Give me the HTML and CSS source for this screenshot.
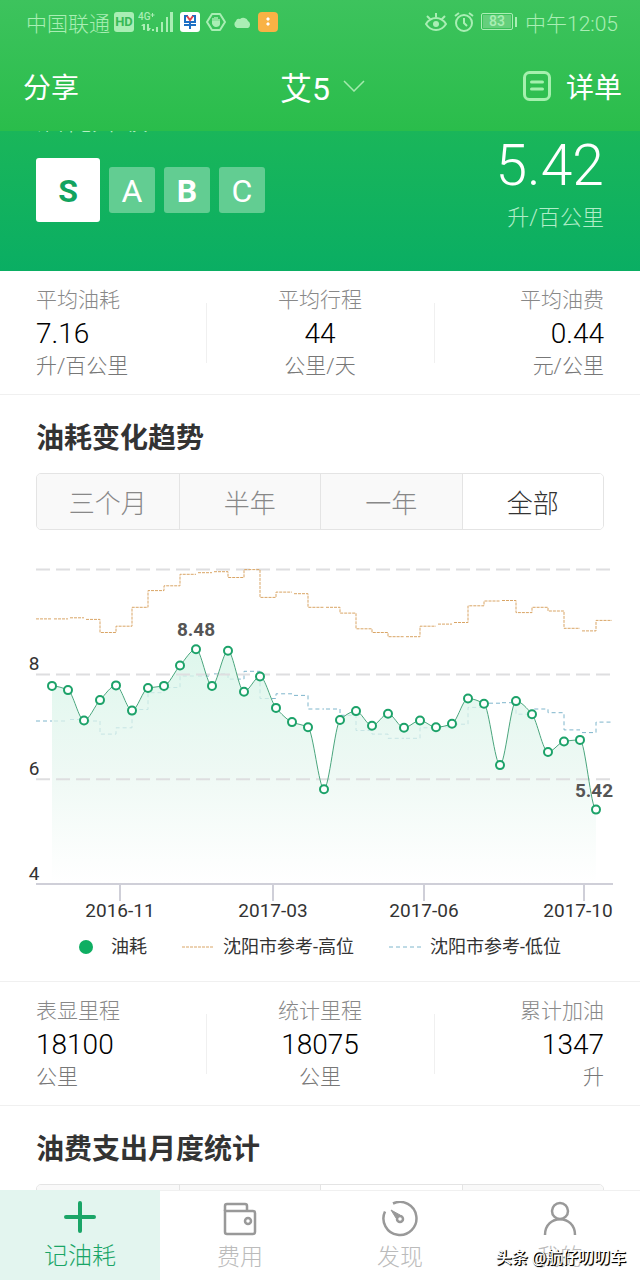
FILE: index.html
```html
<!DOCTYPE html>
<html lang="zh-CN">
<head>
	<meta charset="utf-8" />
	<meta name="viewport" content="width=device-width, initial-scale=1" />
	<title>油耗</title>
	<link rel="stylesheet" href="styles.css">
</head>
<body>

<div class="app">

	<header class="header">
		<!-- 状态栏 -->
		<div class="status">
			<div class="status-left">
				<span>中国联通</span>
				<span class="hd">HD</span>
				<svg width="36" height="22" viewBox="0 0 36 22">
					<text class="net" x="0" y="9">4G</text>
					<g fill="currentColor">
						<path d="M14 2h1v1.500h1.500v1H15V6h-1V4.500h-1.500v-1H14z"/>
						<path d="M5 13h2v6H5v-4H3zM9 13h2v4h2l-2 3H9z"/>
						<rect x="14" y="18" width="2" height="2"/>
						<rect x="18" y="16" width="2" height="5"/>
						<rect x="23" y="11" width="2" height="10"/>
						<rect x="28" y="6" width="2" height="15"/>
						<rect x="32" y="1" width="3" height="20"/>
					</g>
				</svg>
				<svg class="gap" width="20" height="20" viewBox="0 0 20 20">
					<rect width="20" height="20" rx="3" fill="#fff"/>
					<path d="M8 4H5v6h10V4h-3M10 10v7M4 13h12" fill="none" stroke="#1c6fc4" stroke-width="2"/>
					<path d="M7 4l3 4 3-4" fill="none" stroke="#e0434f" stroke-width="2"/>
				</svg>
				<svg class="gap" width="20" height="20" viewBox="0 0 20 20">
					<path d="M6 2h8l5 8-5 8H6l-5-8z" fill="none" stroke="currentColor" stroke-width="2" stroke-linejoin="round"/>
					<path d="M6 10h1M7 6v6M9 5v7M11 5v7M13 7v5" fill="none" stroke="currentColor" stroke-width="1.500"/>
					<path d="M6 9h8v3c0 2-2 3-4 3s-4-2-4-4z" fill="currentColor"/>
				</svg>
				<svg class="gap" width="20" height="20" viewBox="0 0 20 20">
					<path d="M5 16a4 4 0 0 1-1-7 3 3 0 0 1 4-2 5 5 0 0 1 8 2 4 4 0 0 1 0 7z" fill="currentColor"/>
				</svg>
				<svg class="gap" width="20" height="20" viewBox="0 0 20 20">
					<rect width="20" height="20" rx="4" fill="#f9b245"/>
					<path d="M10 5l2 2-2 2-2-2zM10 10l2 2-2 2-2-2z" fill="#fff"/>
				</svg>
			</div>
			<div class="status-right">
				<svg width="22" height="20" viewBox="0 0 22 20" fill="none" stroke="currentColor" stroke-width="2">
					<path d="M1 12c5-8 15-8 20 0-5 8-15 8-20 0zM11 1v4M2 4l3 3M20 4l-3 3"/>
					<circle cx="11" cy="12" r="3" fill="currentColor" stroke="none"/>
				</svg>
				<svg width="20" height="20" viewBox="0 0 20 20" fill="none" stroke="currentColor" stroke-width="2">
					<circle cx="10" cy="11" r="8"/>
					<path d="M10 6v5l3 3M1 4l4-3M19 4l-4-3"/>
				</svg>
				<span class="battery"><span>83</span></span>
				<span>中午12:05</span>
			</div>
		</div>
		<!-- 导航 -->
		<nav class="nav">
			<button class="nav-btn">分享</button>
			<button class="nav-title">艾5
				<svg width="22" height="12" viewBox="0 0 22 12" fill="none" stroke="#a5eaae" stroke-width="1.500"><path d="M1 1l10 10L21 1"/></svg>
			</button>
			<button class="nav-btn nav-list">
				<svg width="28" height="30" viewBox="0 0 28 30" fill="none" stroke="#a5f0ae" stroke-width="3" stroke-linecap="round">
					<rect x="1.500" y="1.500" width="25" height="27" rx="5"/>
					<path d="M8.500 11h11M8.500 18h11"/>
				</svg>
				详单
			</button>
		</nav>
	</header>

	<main class="main">
		<section class="hero">
			<div class="hero-title"><span>油耗升级</span></div>
			<div class="hero-body">
				<div class="levels">
					<span class="level on">S</span>
					<span class="level">A</span>
					<span class="level bold">B</span>
					<span class="level">C</span>
				</div>
				<div class="hero-num">
					<strong>5.42</strong>
					<span>升/百公里</span>
				</div>
			</div>
		</section>

		<section class="stats">
			<div class="stat"><span>平均油耗</span><b>7.16</b><em>升/百公里</em></div>
			<div class="stat"><span>平均行程</span><b>44</b><em>公里/天</em></div>
			<div class="stat"><span>平均油费</span><b>0.44</b><em>元/公里</em></div>
		</section>

		<section class="panel">
			<h2>油耗变化趋势</h2>
			<div class="tabs">
				<button>三个月</button>
				<button>半年</button>
				<button>一年</button>
				<button class="on">全部</button>
			</div>
			<svg class="chart" id="chart" viewBox="0 0 640 370">
				<defs>
					<linearGradient id="fade" x1="0" y1="0" x2="0" y2="1">
						<stop offset="0" stop-color="#d6f5e8" stop-opacity="0.800"/>
						<stop offset="0.500" stop-color="#e6f6ef" stop-opacity="0.700"/>
						<stop offset="1" stop-color="#fff" stop-opacity="0.600"/>
					</linearGradient>
				</defs>
			</svg>
			<div class="legend">
				<span class="key"><i class="dot"></i>油耗</span>
				<span class="key"><svg width="32" height="2"><path class="high" d="M0 1h32"/></svg>沈阳市参考-高位</span>
				<span class="key"><svg width="32" height="2"><path class="low" d="M0 1h32"/></svg>沈阳市参考-低位</span>
			</div>
		</section>

		<section class="stats">
			<div class="stat"><span>表显里程</span><b>18100</b><em>公里</em></div>
			<div class="stat"><span>统计里程</span><b>18075</b><em>公里</em></div>
			<div class="stat"><span>累计加油</span><b>1347</b><em>升</em></div>
		</section>

		<section class="panel">
			<h2>油费支出月度统计</h2>
			<div class="tabs">
				<button></button>
				<button></button>
				<button class="on"></button>
				<button></button>
			</div>
		</section>
	</main>

	<!-- 底部菜单 -->
	<footer class="menu">
		<a class="on" href="#">
			<svg width="36" height="36" viewBox="0 0 36 36" fill="none" stroke="#1aa567" stroke-width="4" stroke-linecap="round"><path d="M18 4v28M4 18h28"/></svg>
			<span>记油耗</span>
		</a>
		<a href="#">
			<svg width="36" height="36" viewBox="0 0 36 36" fill="none" stroke="#999" stroke-width="2.500">
				<path d="M3 10V5a2 2 0 0 1 2-2h18a2 2 0 0 1 2 2v5"/>
				<path d="M3 10h28a2 2 0 0 1 2 2v19a2 2 0 0 1-2 2H5a2 2 0 0 1-2-2z"/>
				<circle cx="26" cy="20" r="3"/>
			</svg>
			<span>费用</span>
		</a>
		<a href="#">
			<svg width="36" height="36" viewBox="0 0 36 36" fill="none" stroke="#999" stroke-width="2.500">
				<path d="M11 2.500a16.500 16.500 0 1 1-8 8"/>
				<circle cx="18" cy="18" r="3"/>
				<path d="M9 9l9 5-4 3z" fill="#999" stroke-width="1"/>
			</svg>
			<span>发现</span>
		</a>
		<a href="#">
			<svg width="36" height="36" viewBox="0 0 36 36" fill="none" stroke="#999" stroke-width="2.500">
				<circle cx="18" cy="10" r="8"/>
				<path d="M3 34c0-21 30-21 30 0"/>
			</svg>
			<span>我的</span>
		</a>
		<div class="mark">头条 @航仔叨叨车</div>
	</footer>
</div>

<script src="chart.js"></script>
</body>
</html>
```
FILE: styles.css
```css
*{margin:0;padding:0;box-sizing:border-box;}
body{
	font-family: Roboto, "Noto Sans CJK SC", sans-serif;
	font-weight: 300;
	color: #333;
	background: #fff;
}
button{
	border: none;
	background: none;
	font: inherit;
	color: inherit;
	cursor: pointer;
}
svg{
	display: block;
	flex: none;
}
.app{
	display: flex;
	flex-direction: column;
	height: 100vh;
	overflow: hidden;
}

/* 顶部 */
.header{
	flex: none;
	background: linear-gradient(#3dc35d, #2abd4b);
	color: #fff;
}
.status{
	display: flex;
	justify-content: space-between;
	align-items: center;
	height: 43px;
	padding: 0 22px 0 26px;
	font-size: 21px;
	color: #a9eeb4;
}
.status-left, .status-right{
	display: flex;
	align-items: center;
	gap: 7px;
}
.status-left{
	gap: 4px;
}
.status-left .gap{
	margin-left: 2px;
}
.hd{
	width: 20px;
	height: 20px;
	border-radius: 3px;
	background: #a9eeb4;
	color: #37b956;
	font-size: 13px;
	font-weight: 700;
	line-height: 20px;
	text-align: center;
}
.net{
	font-size: 10px;
	font-weight: 500;
	fill: currentColor;
}
.battery{
	position: relative;
	width: 32px;
	height: 17px;
	margin-right: 5px;
	padding: 1px;
	border: 1px solid #a9eeb4;
	border-radius: 2px;
	font-size: 14px;
	font-weight: 500;
	line-height: 13px;
	text-align: center;
}
.battery span{
	display: block;
	background: #65cf7c;
}
.battery:after{
	content: "";
	position: absolute;
	top: 3px;
	right: -5px;
	width: 2px;
	height: 10px;
	background: #a9eeb4;
}
.nav{
	display: grid;
	grid-template-columns: 1fr auto 1fr;
	align-items: center;
	height: 88px;
	padding: 0 18px 2px 23px;
}
.nav-btn{
	font-size: 28px;
	font-weight: 400;
	text-align: left;
}
.nav-title{
	display: flex;
	align-items: center;
	gap: 13px;
	font-size: 32px;
	font-weight: 400;
}
.nav-list{
	display: flex;
	align-items: center;
	justify-content: flex-end;
	gap: 15px;
}

/* 内容 */
.main{
	flex: 1;
	min-height: 0;
	overflow: hidden;
}
.hero{
	padding: 0 36px;
	height: 140px;
	background: linear-gradient(#1ab65a, #0aae63);
	color: #fff;
}
.hero-title{
	display: flex;
	align-items: flex-end;
	height: 8px;
	overflow: hidden;
	font-size: 28px;
	line-height: 36px;
	color: #b4f0c6;
}
.hero-body{
	display: flex;
	justify-content: space-between;
}
.levels{
	display: flex;
	align-items: center;
	gap: 9px;
	height: 64px;
	margin-top: 19px;
}
.level{
	width: 46px;
	height: 46px;
	border-radius: 3px;
	background: #62cd92;
	font-size: 32px;
	font-weight: 400;
	line-height: 49px;
	text-align: center;
}
.level.bold{
	font-weight: 700;
}
.level.on{
	width: 64px;
	height: 64px;
	background: #fff;
	color: #12a35f;
	font-weight: 700;
	line-height: 67px;
}
.hero-num{
	padding-top: 5px;
	text-align: right;
}
.hero-num strong{
	display: block;
	font-size: 57px;
	font-weight: 300;
	line-height: 44px;
}
.hero-num span{
	display: block;
	margin-top: 14px;
	font-size: 22px;
	line-height: 32px;
	color: #b0edc8;
}
.stats{
	display: grid;
	grid-template-columns: 3fr 4fr 3fr;
	padding: 13px 36px 11px;
	border-bottom: 1px solid #f0f0f0;
}
.stat{
	position: relative;
	display: flex;
	flex-direction: column;
	text-align: center;
	font-size: 21px;
	line-height: 33px;
	color: #888;
}
.stat:first-child{
	text-align: left;
}
.stat:last-child{
	text-align: right;
}
.stat + .stat:before{
	content: "";
	position: absolute;
	left: 0;
	top: 19px;
	height: 60px;
	border-left: 1px solid #f0f0f0;
}
.stat b{
	font-size: 28px;
	font-weight: 300;
	color: #000;
}
.stat em{
	font-style: normal;
	color: #777;
}
.panel{
	border-bottom: 1px solid #f0f0f0;
}
.panel h2{
	padding: 24px 36px 14px;
	font-size: 28px;
	font-weight: 700;
	line-height: 40px;
}
.tabs{
	display: grid;
	grid-template-columns: repeat(4, 1fr);
	height: 57px;
	margin: 0 36px;
	border: 1px solid #e4e4e4;
	border-radius: 5px;
	overflow: hidden;
}
.tabs button{
	background: #f9f9f9;
	font-size: 26px;
	color: #888;
}
.tabs button + button{
	border-left: 1px solid #e4e4e4;
}
.tabs .on{
	background: #fff;
	color: #333;
}

/* 图表 */
.chart{
	width: 100%;
	margin-top: 26px;
}
.chart text{
	font-size: 19px;
	font-weight: 400;
	fill: #333;
	text-anchor: middle;
}
.chart .tip{
	font-weight: 700;
	fill: #555;
}
.grid{
	stroke: #dedee0;
	stroke-width: 2;
	stroke-dasharray: 14 6;
}
.axis{
	fill: none;
	stroke: #cfcfd8;
	stroke-width: 2;
}
.area{
	fill: url(#fade);
}
.line{
	fill: none;
	stroke: #4ba67e;
	stroke-width: 1;
}
.point{
	fill: #fff;
	stroke: #1ca269;
	stroke-width: 2;
}
.high{
	fill: none;
	stroke: #d9a566;
	stroke-dasharray: 3 1;
}
.low{
	fill: none;
	stroke: #7fb6cc;
	stroke-dasharray: 4 3;
}
.legend{
	display: flex;
	justify-content: center;
	gap: 35px;
	padding: 7px 0 20px;
	font-size: 18px;
	font-weight: 400;
	line-height: 28px;
}
.key{
	display: flex;
	align-items: center;
	gap: 9px;
}
.dot{
	width: 14px;
	height: 14px;
	margin-right: 9px;
	border-radius: 50%;
	background: #0fae62;
}

/* 底部 */
.menu{
	position: relative;
	flex: none;
	display: grid;
	grid-template-columns: repeat(4, 1fr);
	height: 90px;
	background: #fff;
}
.menu a{
	display: flex;
	flex-direction: column;
	align-items: center;
	padding-top: 10px;
	border-top: 1px solid #f0f0f0;
	font-size: 23px;
	line-height: 34px;
	color: #bbb;
	text-decoration: none;
}
.menu span{
	margin-top: 4px;
}
.menu .on{
	padding-top: 8px;
	border-color: #e3f5ef;
	background: #e3f5ef;
	font-size: 24px;
	color: #1aa567;
}
.mark{
	position: absolute;
	right: 14px;
	bottom: 10px;
	font-size: 16px;
	font-weight: 500;
	line-height: 24px;
	color: #fff;
	text-shadow: 1px 1px 0 #000, 1px 1px 1px #000;
}
```
FILE: chart.js
```js
;(function() {
  let oil = [7.78,7.7,7.12,7.51,7.79,7.31,7.74,7.78,8.17,8.48,7.78,8.45,7.67,7.96,7.36,7.09,6.99,5.81,7.13,7.3,7.02,7.25,6.98,7.12,6.99,7.06,7.54,7.44,6.27,7.49,7.24,6.52,6.72,6.75,5.42]
  let high = [9.06,9.06,9.08,9.05,8.8,8.92,9.28,9.6,9.69,9.91,9.94,9.96,9.85,10,9.47,9.57,9.54,9.28,9.28,9.17,8.87,8.8,8.72,8.72,8.92,8.96,8.99,9.31,9.4,9.41,9.18,9.28,9.21,8.88,8.83,9.03]
  let low = [7.11,7.11,7.14,7.11,6.86,6.98,7.33,7.65,7.75,7.97,7.97,8.01,7.91,8.06,7.54,7.63,7.6,7.34,7.34,7.22,6.93,6.86,6.78,6.78,6.98,7,7.05,7.37,7.45,7.46,7.24,7.34,7.27,6.94,6.89,7.09]
  let months = [[120, "2016-11"], [273, "2017-03"], [424, "2017-06"], [584, "2017-10"]]
  let left = 36
  let right = 613
  let step = 16

  // 数值转坐标
  function y(v) {
    return Math.round((328 - (v - 4) * 52.4) * 10) / 10
  }
  function x(i) {
    return left + step * (i + 1)
  }

  // 阶梯线，落差太小时断开
  function stairs(list) {
    let d = "M" + left + " " + y(list[0])
    list.forEach(function(v, i) {
      if(i > 0 && Math.abs(y(v) - y(list[i - 1])) < 3) {
        d += "M" + (x(i - 1) + 2) + " " + y(v)
      }else{
        d += "V" + y(v)
      }
      d += "H" + x(i)
    })
    return d
  }

  // 平滑曲线
  function curve(list) {
    let slope = list.map(function(v, i) {
      if(i === 0 || i === list.length - 1) return 0
      let a = y(v) - y(list[i - 1])
      let b = y(list[i + 1]) - y(v)
      return a * b <= 0 ? 0 : 2 * a * b / (a + b)
    })
    let d = "M" + x(0) + " " + y(list[0])
    for(let i = 1; i < list.length; i++) {
      let y1 = y(list[i - 1]) + slope[i - 1] * 0.3
      let y2 = y(list[i]) - slope[i] * 0.3
      d += "C" + [x(i - 1) + 5, y1, x(i) - 5, y2, x(i), y(list[i])].join(" ")
    }
    return d
  }

  let html = ""
  let line = curve(oil)
  let end = x(oil.length - 1)
  html += '<path class="low" d="' + stairs(low) + '"/>'
  html += '<path class="area" d="' + line + 'V328H' + x(0) + 'Z"/>'
  ;[10, 8, 6].forEach(function(v) {
    html += '<path class="grid" d="M' + left + ' ' + y(v) + 'H' + right + '"/>'
  })
  ;[8, 6, 4].forEach(function(v) {
    html += '<text x="34" y="' + (y(v) - 4) + '">' + v + '</text>'
  })
  html += '<path class="axis" d="M' + left + ' 328H' + right + '"/>'
  months.forEach(function(m) {
    html += '<path class="axis" d="M' + m[0] + ' 328v17"/>'
    html += '<text x="' + Math.min(m[0], right - 35) + '" y="361">' + m[1] + '</text>'
  })
  html += '<path class="high" d="' + stairs(high) + '"/>'
  html += '<path class="line" d="' + line + '"/>'
  oil.forEach(function(v, i) {
    html += '<circle class="point" cx="' + x(i) + '" cy="' + y(v) + '" r="4"/>'
  })
  html += '<text class="tip" x="' + x(9) + '" y="' + (y(8.48) - 13) + '">8.48</text>'
  html += '<text class="tip" x="' + (end - 2) + '" y="' + (y(5.42) - 13) + '">5.42</text>'

  document.getElementById("chart").insertAdjacentHTML("beforeend", html)
})()
```
